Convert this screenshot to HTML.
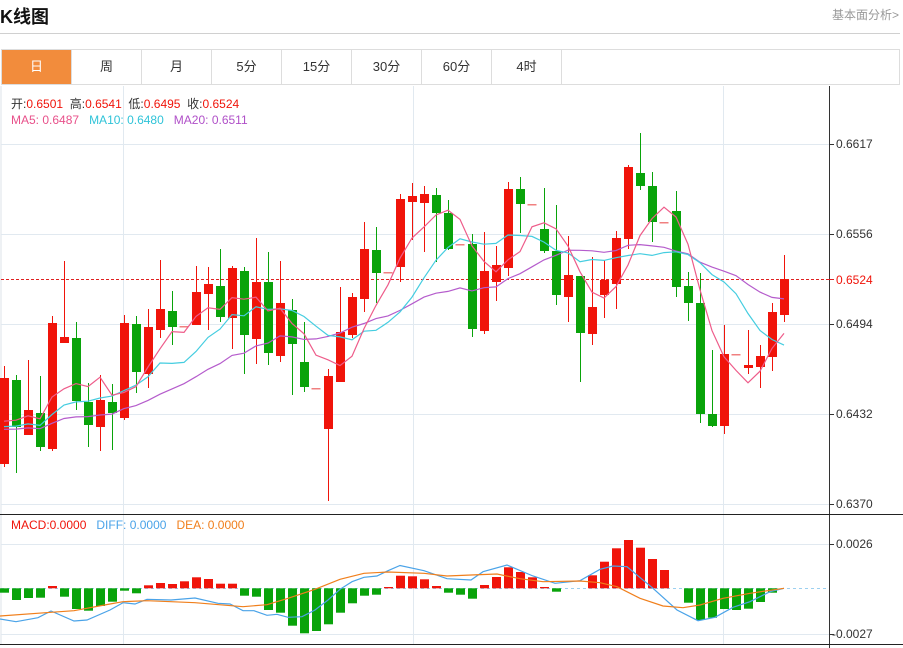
<!DOCTYPE html>
<html><head><meta charset="utf-8">
<style>
body{margin:0;width:903px;height:648px;background:#fff;position:relative;overflow:hidden;font-family:"Liberation Sans","Noto Sans CJK SC",sans-serif}
.t{position:absolute;left:0;top:3px;font-size:18px;font-weight:bold;color:#111}
.r{position:absolute;right:4px;top:6px;font-size:12px;color:#999}
.hl{position:absolute;left:0;top:33px;width:900px;height:1px;background:#d0d0d0}
.tabs{position:absolute;left:1px;top:49px;width:899px;height:36px;border:1px solid #ddd;box-sizing:border-box;display:flex}
.tabs div{width:70px;border-right:1px solid #ddd;text-align:center;line-height:34px;font-size:13px;color:#333;box-sizing:border-box}
.tabs div.on{background:#f28c3c;color:#fff}
svg{position:absolute;left:0;top:0}
.lg{position:absolute;left:11px;font-size:12px;color:#333;white-space:nowrap}
.red{color:#f0140a}
</style></head><body>
<div class="t">K线图</div>
<div class="r">基本面分析&gt;</div>
<div class="hl"></div>
<div class="tabs"><div class="on">日</div><div>周</div><div>月</div><div>5分</div><div>15分</div><div>30分</div><div>60分</div><div>4时</div></div>
<svg id="s" width="903" height="648" xmlns="http://www.w3.org/2000/svg"></svg>
<div class="lg" style="top:95px">开:<span class="red">0.6501</span>&nbsp;&nbsp;高:<span class="red">0.6541</span>&nbsp;&nbsp;低:<span class="red">0.6495</span>&nbsp;&nbsp;收:<span class="red">0.6524</span></div>
<div class="lg" style="top:113px"><span style="color:#e8508a">MA5: 0.6487</span>&nbsp;&nbsp;&nbsp;<span style="color:#2fc3d8">MA10: 0.6480</span>&nbsp;&nbsp;&nbsp;<span style="color:#b050c8">MA20: 0.6511</span></div>
<div class="lg" style="top:518px"><span style="color:#f0140a">MACD:0.0000</span>&nbsp;&nbsp;&nbsp;<span style="color:#4aa3e8">DIFF: 0.0000</span>&nbsp;&nbsp;&nbsp;<span style="color:#f07f1c">DEA: 0.0000</span></div>
<script>
var D=[[378,464,366,467,1],[380,427,375,473,0],[410,435,360,435,1],[413,447,376,451,0],[323,449,316,451,1],[337,343,261,343,1],[338,401,322,410,0],[402,425,383,447,0],[400,427,375,451,1],[402,413,384,450,0],[323,418,315,420,1],[324,372,316,393,0],[327,374,309,388,1],[309,330,260,338,1],[311,327,291,345,0],[326,328,326,328,2],[292,325,266,325,1],[284,294,267,330,1],[286,317,249,322,0],[268,318,266,349,1],[271,335,267,374,0],[282,339,238,364,1],[282,353,252,365,0],[303,356,261,362,1],[310,344,299,395,0],[362,387,322,392,0],[388,390,388,390,2],[376,429,369,501,1],[332,382,287,382,1],[297,335,293,338,1],[249,299,222,312,1],[250,273,227,303,0],[272,274,272,274,2],[199,267,194,282,1],[196,202,183,240,1],[194,203,186,252,1],[195,213,188,262,0],[213,249,200,250,0],[244,246,244,246,2],[244,329,234,337,0],[271,331,232,334,1],[265,282,246,301,1],[189,268,182,276,1],[189,204,177,233,0],[204,206,204,206,2],[229,251,188,253,0],[251,295,205,305,0],[275,297,236,322,1],[276,333,276,382,0],[307,334,257,345,1],[280,295,260,318,1],[238,284,231,309,1],[167,239,165,249,1],[173,186,133,190,0],[186,222,172,242,0],[222,224,222,224,2],[211,287,191,297,0],[286,303,272,321,0],[303,414,273,423,0],[414,426,350,427,0],[354,426,325,434,1],[354,356,354,356,2],[365,368,330,374,1],[356,367,345,388,1],[312,357,303,371,1],[279,315,255,322,1]];
var H=[592.7,600,598,597.7,586,596.7,609,610.7,606,601.7,590.7,593.3,585.3,583,584,581.3,577.3,579,583.7,583.7,595.7,596.7,610,612.7,625.7,633.3,631,624.3,612.7,603.3,595.7,594.7,587,575.7,576.3,579.3,586,592.7,594.7,598.7,585,577,567.3,572,577.3,587,591.7,588,588,575.3,561.7,548.3,540,547.7,559,570,588,602.7,620,617.7,609,610,608.7,602,592.7,588];
var DIF=[[0,619],[16,621.7],[38,617.7],[51,611],[74,621],[87,620],[110,610],[123,602.7],[135,604],[147,599.3],[171,600],[195,598],[218,603.3],[230,604],[243,610.7],[254,610.7],[267,615.3],[277,614.3],[288,617.3],[302,616.7],[315,610],[328,600],[340,589.3],[352,581.7],[364,577.3],[377,576],[388,570.7],[400,565.5],[424,570.7],[447,578.7],[471,580],[483,571.7],[507,565],[533,576],[555,583.3],[580,580.7],[600,569.3],[613,566],[627,566.7],[653,588.3],[677,610],[698,620.7],[715,617.3],[733,607.3],[750,601.7],[770,591.7],[784,588.3]];
var DEA=[[0,616],[51,612.3],[74,610.7],[110,604],[123,601.7],[147,600.7],[195,602.7],[243,606.7],[267,604.7],[288,598.3],[315,589.3],[340,579.3],[364,573.3],[388,572],[424,573.3],[447,576],[471,575],[497,574],[520,578.7],[543,581.7],[580,581],[600,582.7],[617,586.7],[640,598.3],[663,606],[683,607.7],[700,605],[723,598.3],[750,593.3],[784,588.3]];
var h='';
function L(x1,y1,x2,y2,c,w,da){h+='<line x1="'+x1+'" y1="'+y1+'" x2="'+x2+'" y2="'+y2+'" stroke="'+c+'" stroke-width="'+(w||1)+'"'+(da?' stroke-dasharray="'+da+'"':'')+'/>';}
L(1,86,1,645,'#dde3e8');
[144,234,324,414,504].forEach(function(y){L(1,y+.5,829,y+.5,'#e1e9f0');L(829,y+.5,834,y+.5,'#333');});
[123,413,723].forEach(function(x){L(x+.5,86,x+.5,645,'#e1e9f0');});
[544,634].forEach(function(y){L(1,y+.5,829,y+.5,'#e1e9f0');L(829,y+.5,834,y+.5,'#333');});
L(829.5,86,829.5,648,'#333');
L(0,514.5,903,514.5,'#222');
L(0,644.5,903,644.5,'#222');
var labs=[[144,'0.6617'],[234,'0.6556'],[324,'0.6494'],[414,'0.6432'],[504,'0.6370'],[544,'0.0026'],[634,'-0.0027']];
labs.forEach(function(a){h+='<text x="'+(a[1][0]=='-'?832:836)+'" y="'+(a[0]+4)+'" font-size="12" fill="#333" font-family="Liberation Sans">'+a[1]+'</text>';});
L(1,279.5,829,279.5,'#e02020',1,'3,2');
L(829,279.5,834,279.5,'#e02020');
h+='<text x="836" y="284" font-size="12" fill="#f0140a" font-family="Liberation Sans">0.6524</text>';
var closes=[];
D.forEach(function(d,i){var x=4+12*i;var col=d[4]==0?'#09a30a':'#f0140a';
 if(d[4]==2){h+='<rect x="'+(x-4.5)+'" y="'+(d[0])+'" width="9" height="1.5" fill="#f08080"/>';closes.push((d[0]+d[1])/2);return;}
 L(x+.5,d[2],x+.5,d[3],col);
 h+='<rect x="'+(x-4)+'" y="'+d[0]+'" width="9" height="'+(d[1]-d[0])+'" fill="'+col+'"/>';
 closes.push(d[4]==1?d[0]:d[1]);});
var pad=[];for(var k=0;k<20;k++)pad.push(432);
var all=pad.concat(closes);
function ma(n,c){var pts=[];for(var i=0;i<closes.length;i++){var s=0;for(var j=0;j<n;j++)s+=all[20+i-j];pts.push((4+12*i)+','+(s/n).toFixed(1));}
 h+='<polyline points="'+pts.join(' ')+'" fill="none" stroke="'+c+'" stroke-width="1.2"/>';}
ma(20,'#b55ccc');ma(10,'#45cde0');ma(5,'#ee5c8a');
// MACD
L(1,588.5,829,588.5,'#9cd0f0',1,'3,3');
H.forEach(function(y,i){var x=4+12*i;if(Math.abs(y-588.3)<1)return;var pos=y<588.3;
 h+='<rect x="'+(x-4)+'" y="'+(pos?y:588.3)+'" width="9" height="'+Math.abs(y-588.3)+'" fill="'+(pos?'#f0140a':'#09a30a')+'"/>';});
function pl(a,c){h+='<polyline points="'+a.map(function(p){return p[0]+','+p[1]}).join(' ')+'" fill="none" stroke="'+c+'" stroke-width="1.2"/>';}
pl(DIF,'#4aa3e8');pl(DEA,'#f07f1c');
document.getElementById('s').innerHTML=h;
</script>
</body></html>
